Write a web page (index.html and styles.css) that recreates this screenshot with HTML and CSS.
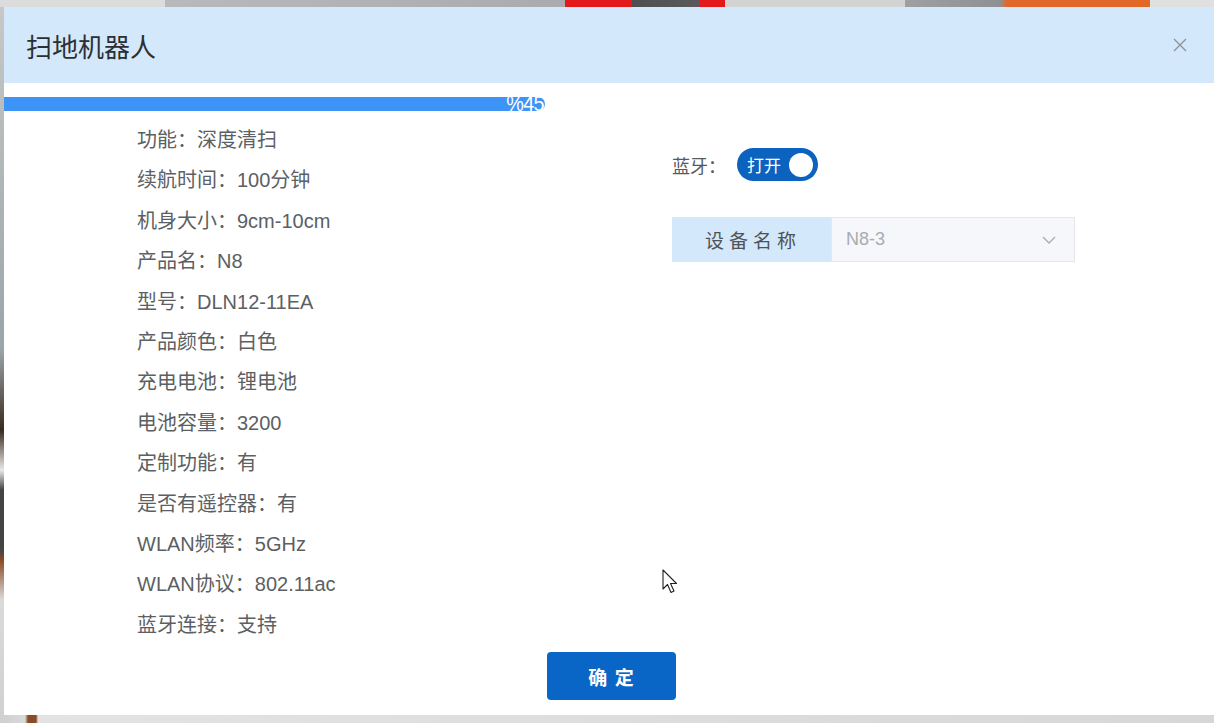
FILE: index.html
```html
<!DOCTYPE html>
<html lang="zh-CN">
<head>
<meta charset="utf-8">
<title>扫地机器人</title>
<link rel="stylesheet" href="styles.css">
</head>
<body>
<div class="modal">
  <div class="modal-header">
    <h1 class="modal-title">扫地机器人</h1>
    <svg class="close-icon" width="14" height="14" viewBox="0 0 14 14"><path d="M1 1L13 13M13 1L1 13" stroke="#8e949c" stroke-width="1.4" fill="none"/></svg>
  </div>
  <div class="progress"><span class="progress-text">%45</span></div>
  <div class="content">
    <ul class="spec-list">
      <li>功能：深度清扫</li>
      <li>续航时间：100分钟</li>
      <li>机身大小：9cm-10cm</li>
      <li>产品名：N8</li>
      <li>型号：DLN12-11EA</li>
      <li>产品颜色：白色</li>
      <li>充电电池：锂电池</li>
      <li>电池容量：3200</li>
      <li>定制功能：有</li>
      <li>是否有遥控器：有</li>
      <li>WLAN频率：5GHz</li>
      <li>WLAN协议：802.11ac</li>
      <li>蓝牙连接：支持</li>
    </ul>
    <div class="side">
      <div class="bt-row">
        <span class="bt-label">蓝牙：</span>
        <div class="switch"><span class="switch-text">打开</span><span class="switch-knob"></span></div>
      </div>
      <div class="select-group">
        <div class="select-label">设备名称</div>
        <div class="select-box">
          <span class="select-value">N8-3</span>
          <svg class="chevron" width="14" height="8" viewBox="0 0 14 8"><path d="M1 1L7 7L13 1" stroke="#a8abb2" stroke-width="1.3" fill="none"/></svg>
        </div>
      </div>
    </div>
  </div>
  <div class="footer">
    <button class="ok-btn">确 定</button>
  </div>
  <svg class="cursor" width="18" height="26" viewBox="0 0 18 26"><path d="M1 1L1 20L5.5 15.5L9 23.5L12 22L8.5 14.5L14.5 14.5Z" fill="#fff" stroke="#222" stroke-width="1.1" stroke-linejoin="round"/></svg>
</div>
</body>
</html>
```
FILE: styles.css
```css
* { box-sizing: border-box; }
html, body { margin: 0; }
body {
  width: 1214px;
  height: 723px;
  overflow: hidden;
  padding: 7px 0 0 4px;
  font-family: "Liberation Sans", "Noto Sans CJK SC", sans-serif;
  background-color: #d6d6d6;
  background-image:
    linear-gradient(to right, #dcdcdc 0, #dcdcdc 165px, #b9b9bd 165px, #a9abb0 565px, #e3191b 565px, #e3191b 632px, #4f4f52 632px, #5a5a5d 700px, #e3191b 700px, #e3191b 725px, #d3d3d3 725px, #d3d3d3 905px, #9ea0a4 905px, #8d9094 1000px, #e2682a 1007px, #e2682a 1150px, #e0e0e0 1150px),
    linear-gradient(to bottom, #c8c8c8 0, #9aa5a8 350px, #3a2a1e 430px, #e8e8e8 470px, #444 490px, #444 550px, #8a4a25 560px, #dadada 600px, #d0d0d0 723px),
    linear-gradient(to right, #cfcfcf 0, #d9d9d9 25px, #8b4b28 28px, #8b4b28 36px, #e3e3e3 38px, #d7d7d7 1214px);
  background-size: 100% 7px, 4px 100%, 100% 8px;
  background-position: 0 0, 0 0, 0 715px;
  background-repeat: no-repeat;
}
.modal {
  position: relative;
  width: 1210px;
  height: 708px;
  background: #fff;
  display: flex;
  flex-direction: column;
}
.modal-header {
  height: 76px;
  background: #d3e8fa;
  display: flex;
  align-items: center;
  justify-content: space-between;
  padding: 0 27px 0 22px;
}
.modal-title {
  margin: 0;
  font-size: 26px;
  font-weight: normal;
  color: #2b2f33;
}
.close-icon { display: block; }
.progress {
  margin-top: 14px;
  width: 541px;
  height: 14px;
  background: #3e93f6;
  border-radius: 0 7px 7px 0;
  display: flex;
  justify-content: flex-end;
  align-items: center;
}
.progress-text {
  color: #fff;
  font-size: 22px;
  line-height: 14px;
  letter-spacing: -0.8px;
  padding-right: 1px;
  transform: scaleX(0.9);
  transform-origin: right center;
}
.content {
  margin-top: 9px;
  display: grid;
  grid-template-columns: 668px 1fr;
}
.spec-list {
  list-style: none;
  margin: 0;
  padding: 0 0 0 133px;
}
.spec-list li {
  height: 40.4px;
  line-height: 40.4px;
  font-size: 20px;
  color: #5c5f63;
  white-space: nowrap;
}
.side { padding-top: 28px; }
.bt-row {
  display: flex;
  align-items: center;
  height: 33px;
}
.bt-label {
  font-size: 18px;
  color: #555a5e;
  width: 65px;
}
.switch {
  width: 81px;
  height: 33px;
  border-radius: 17px;
  background: #0b63bf;
  display: flex;
  align-items: center;
  justify-content: space-between;
  padding: 0 5px 0 10px;
}
.switch-text {
  color: #fff;
  font-size: 17px;
}
.switch-knob {
  width: 24px;
  height: 24px;
  border-radius: 50%;
  background: #fff;
}
.select-group {
  margin-top: 36px;
  width: 403px;
  height: 45px;
  display: flex;
}
.select-label {
  width: 159px;
  background: #d3e8fa;
  display: flex;
  align-items: center;
  justify-content: center;
  font-size: 19px;
  letter-spacing: 5px;
  padding-left: 3px;
  color: #4f5357;
}
.select-box {
  flex: 1;
  background: #f5f7fa;
  border: 1px solid #e4e7ed;
  display: flex;
  align-items: center;
  justify-content: space-between;
  padding: 0 18px 0 14px;
}
.select-value {
  font-size: 18px;
  color: #a8abb2;
}
.chevron { display: block; }
.footer {
  margin-top: 7px;
  display: flex;
  justify-content: center;
  padding-left: 5px;
}
.ok-btn {
  width: 129px;
  height: 48px;
  border: none;
  border-radius: 4px;
  background: #0a66c6;
  color: #fff;
  font-family: "Liberation Sans", "Noto Sans CJK SC", sans-serif;
  font-size: 19px;
  font-weight: 600;
  letter-spacing: 1px;
}
.cursor {
  position: absolute;
  left: 658px;
  top: 562px;
}
```
